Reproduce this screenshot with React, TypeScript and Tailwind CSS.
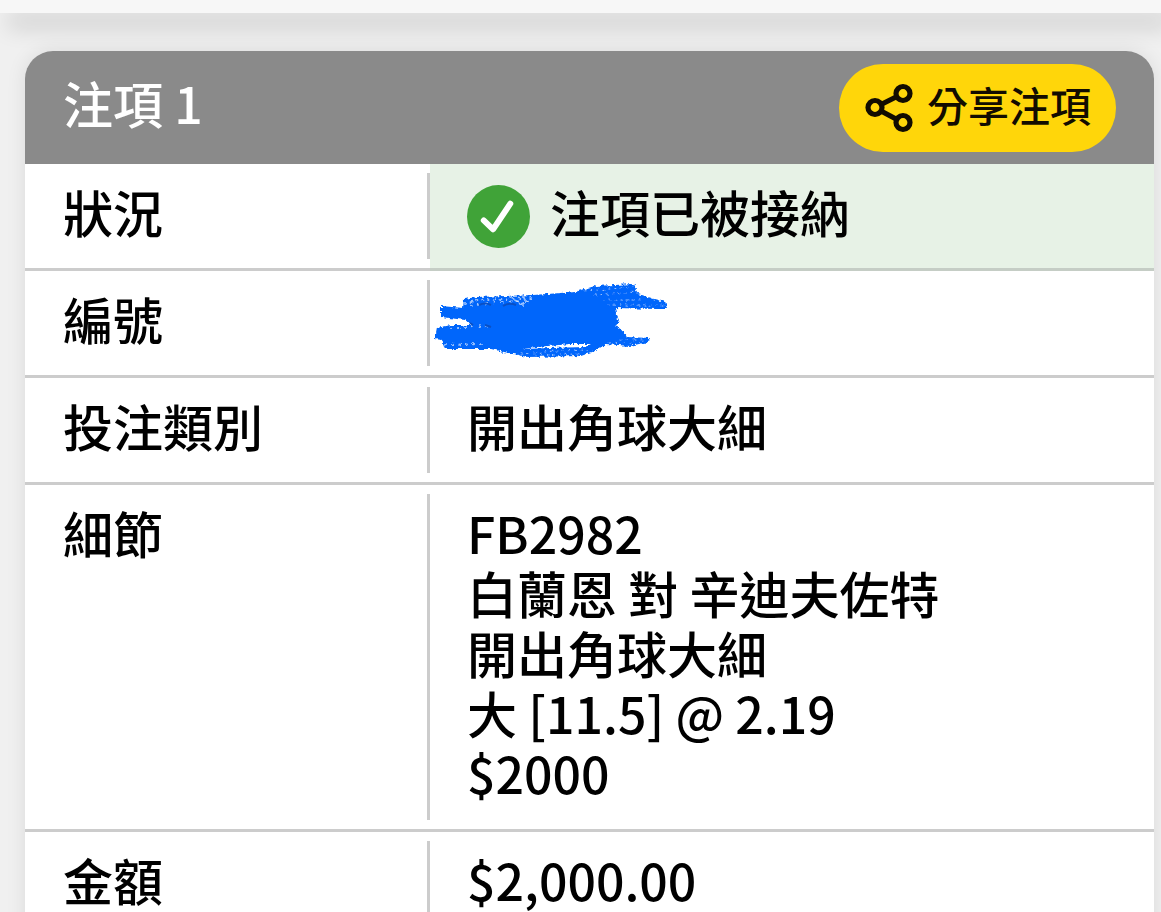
import React from "react";

interface BetRow {
  label: string;
  content: React.ReactNode;
  accepted?: boolean;
}

const ShareIcon = () => (
  <svg viewBox="0 0 50 50" className="h-[50px] w-[50px] shrink-0" fill="none" stroke="#120c00" strokeWidth="5.2" aria-hidden="true">
    <circle cx="11" cy="24.5" r="7" />
    <circle cx="39" cy="10.5" r="7" />
    <circle cx="39" cy="39.5" r="7" />
    <path d="M17 21.5 33 13.5M17 28 33 36.5" />
  </svg>
);

const AcceptedIcon = () => (
  <svg viewBox="0 0 64 64" className="mt-1 h-[63px] w-[63px] shrink-0" aria-hidden="true">
    <circle cx="32" cy="32" r="32" fill="#40a338" />
    <path d="M17 36 26.5 45 44 19" fill="none" stroke="#fff" strokeWidth="6" strokeLinecap="round" strokeLinejoin="round" />
  </svg>
);

// Crayon marks that cover the bet number
const Scribble = () => (
  <svg viewBox="0 0 250 100" className="absolute -top-[13px] left-[-42px] h-[100px] w-[250px]" aria-hidden="true">
    <defs>
      <filter id="rough" x="-5%" y="-10%" width="110%" height="120%">
        <feTurbulence type="fractalNoise" baseFrequency="0.3" numOctaves="2" seed="4" result="n" />
        <feDisplacementMap in="SourceGraphic" in2="n" scale="5" xChannelSelector="R" yChannelSelector="G" />
      </filter>
    </defs>
    <g filter="url(#rough)">
      <path
        fill="#0366fb"
        d="M16 31 38 33 39 24 52 22 108 20 150 17 170 11 209 9 213 19 222 22 240 27 242 34 232 34 190 33 191 39 194 45 191 51 199 57 201 62 225 63 223 67 205 71 181 69 170 76 156 81 102 82 66 74 20 74 17 65 10 64 12 53 26 50 46 50 40 45 16 42Z"
      />
      <path d="M98 74 112 72 145 69 166 69 160 72 125 73Z" fill="#fff" />
      <g fill="none" stroke="#fff" strokeOpacity=".6" strokeLinecap="round">
        <path d="M40 29 52 25 106 23" strokeWidth="2" strokeDasharray="1 5" />
        <path d="M45 31 70 27 107 27" strokeWidth="2" strokeDasharray="1 7" />
        <path d="M84 21 98 30M96 20 104 28" strokeWidth="2" strokeDasharray="3 4" />
        <path d="M160 16 208 12M170 20 212 17M178 25 220 25M183 30 238 30" strokeWidth="1" strokeDasharray="1 5" />
        <path d="M26 54 48 51 64 52M20 70 58 69" strokeWidth="2" strokeDasharray="1 6" />
        <path d="M195 65 222 65M184 67 207 68" strokeWidth="1" strokeDasharray="1 6" />
        <path d="M96 79 130 76 163 75M110 80 155 79" strokeWidth="1" strokeDasharray="1 5" />
      </g>
    </g>
    <path d="M54 30Q60 27 66 30M78 31Q84 27 91 30M45 48 48 50M60 50 66 52" fill="none" stroke="#0a50c4" strokeWidth="2" />
  </svg>
);

const rows: BetRow[] = [
  {
    label: "狀況",
    accepted: true,
    content: (
      <div className="flex h-[60px] items-start gap-5">
        <AcceptedIcon />
        <span>注項已被接納</span>
      </div>
    ),
  },
  {
    label: "編號",
    content: (
      <div className="relative h-[60px]">
        <Scribble />
      </div>
    ),
  },
  { label: "投注類別", content: "開出角球大細" },
  {
    label: "細節",
    content: (
      <>
        <p>FB2982</p>
        <p>白蘭恩 對 辛迪夫佐特</p>
        <p>開出角球大細</p>
        <p>大 [11.5] @ 2.19</p>
        <p>$2000</p>
      </>
    ),
  },
  { label: "金額", content: "$2,000.00" },
];

const App: React.FC = () => {
  return (
    <div lang="zh-Hant" className="h-screen overflow-hidden bg-[#f0f0f0] font-['Noto_Sans_CJK_TC',sans-serif] font-medium text-black">
      <div className="relative h-[13px] bg-[#f7f7f7] shadow-[8px_14px_22px_rgba(0,0,0,0.17)]" />

      <main className="pt-[38px] pr-[7px] pl-[25px]">
        <section className="rounded-t-[28px] bg-white shadow-[0_0_20px_rgba(0,0,0,0.09)]">
          <header className="flex h-[113px] items-center justify-between rounded-t-[28px] bg-[#8a8a8a] px-[38px]">
            <h1 className="pb-3 text-[50px] leading-[60px] text-white">注項 1</h1>
            <button
              type="button"
              className="flex h-[88px] items-center gap-[13px] rounded-[44px] bg-[#ffd60a] px-[25px] text-[41px] leading-[60px] text-[#120c00]"
            >
              <ShareIcon />
              <span className="pb-2">分享注項</span>
            </button>
          </header>

          <table className="w-full table-fixed border-separate border-spacing-0 text-[50px] leading-[60px]">
            <tbody>
              {rows.map((row) => (
                <tr key={row.label}>
                  <th
                    scope="row"
                    className="relative w-[405px] border-b-[3px] border-[#cccccc] pt-[17px] pb-[27px] pl-[38px] text-left align-top font-medium after:absolute after:inset-y-[9px] after:right-0 after:w-[3px] after:bg-[#cccccc]"
                  >
                    {row.label}
                  </th>
                  <td
                    className={
                      row.accepted
                        ? "border-b-[3px] border-[#c5cdc5] bg-[#e7f2e6] pt-[17px] pb-[27px] pl-[37px] align-top"
                        : "border-b-[3px] border-[#cccccc] pt-[17px] pb-[27px] pl-[37px] align-top"
                    }
                  >
                    {row.content}
                  </td>
                </tr>
              ))}
            </tbody>
          </table>
        </section>
      </main>
    </div>
  );
};

export default App;
